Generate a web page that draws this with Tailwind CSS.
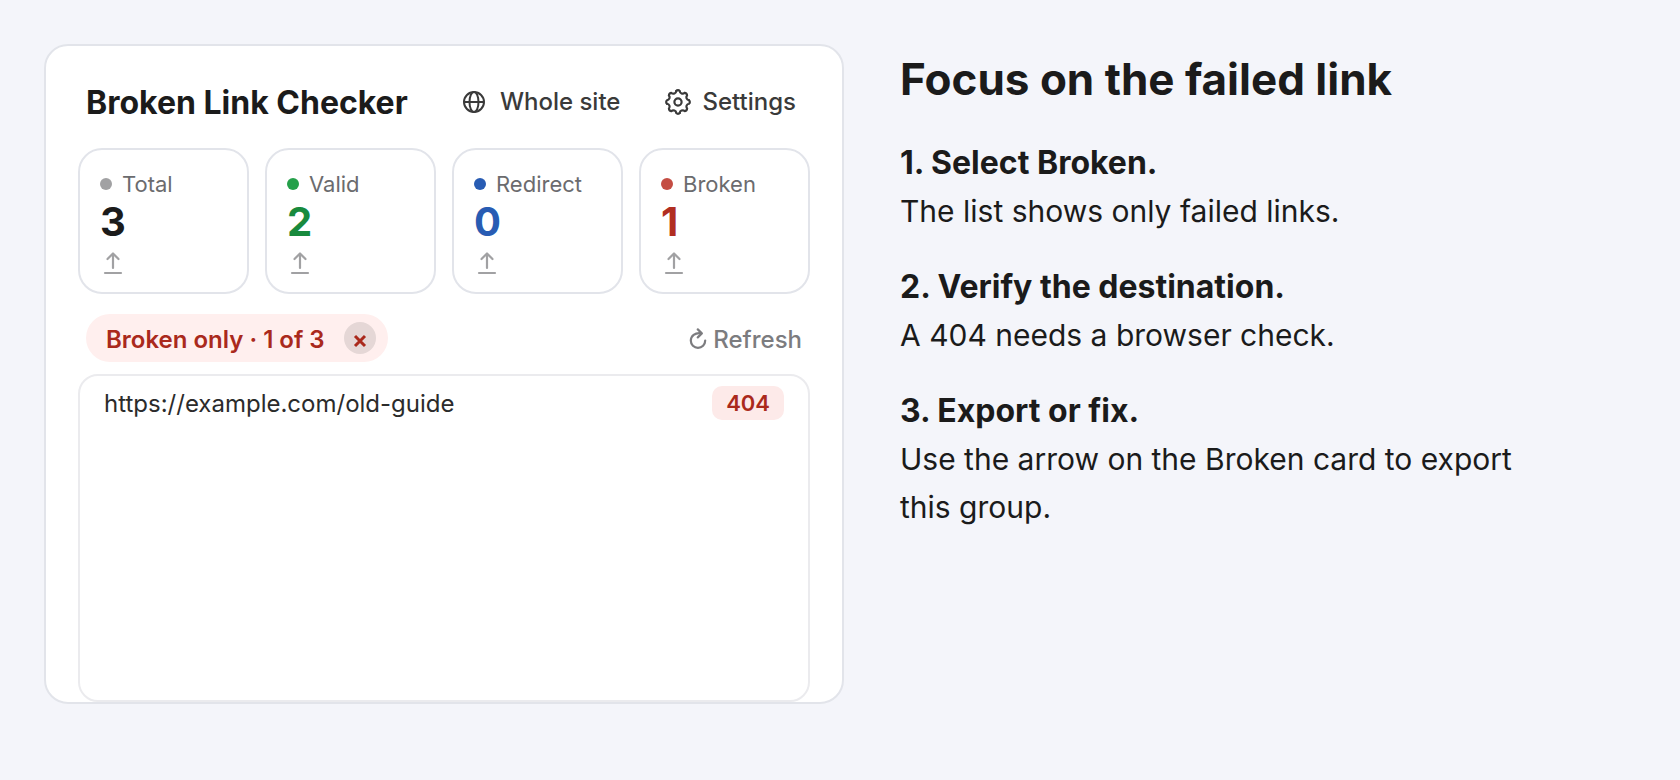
<!DOCTYPE html>
<html lang="en">
<head>
<meta charset="utf-8">
<meta name="viewport" content="width=device-width, initial-scale=1">
<title>Broken Link Checker</title>
<script src="https://cdn.jsdelivr.net/npm/@tailwindcss/browser@4"></script>
</head>
<body class="min-h-screen bg-[#f4f5fa] font-['Inter',sans-serif] text-[#1b1b1b]">
<svg class="hidden" aria-hidden="true">
  <symbol id="export" viewBox="0 0 26 26">
    <path d="M13 18V4M7.5 9 13 3.5 18.5 9" fill="none" stroke="currentColor" stroke-width="2.2" stroke-linecap="round" stroke-linejoin="round"/>
    <path d="M5 23h16" stroke="currentColor" stroke-width="2.2" stroke-linecap="round"/>
  </symbol>
  <path id="tooth" d="M11.06-1.75A2.4 2.4 0 0 1 11.06 1.75C8.7 1.85 7.46 4.85 9.06 6.58"/>
</svg>
<main class="grid items-start gap-14 p-11 lg:grid-cols-[25fr_23fr]">
  <section class="flex flex-col overflow-hidden rounded-3xl border-2 border-[#e2e4ea] bg-white px-8 pt-8">
    <header class="mb-[22px] flex h-12 items-center gap-11 pr-[14px] pl-2">
      <h1 class="mr-auto pt-[2px] text-[32px] font-bold whitespace-nowrap">Broken Link Checker</h1>
      <button type="button" class="flex items-center gap-[14px] text-2xl font-medium whitespace-nowrap text-[#3a3a3a]">
        <svg class="size-6" viewBox="0 0 24 24" fill="none" stroke="currentColor" stroke-width="2" aria-hidden="true"><circle cx="12" cy="12" r="10"/><ellipse cx="12" cy="12" rx="4.5" ry="10"/><path d="M2 12h20"/></svg>
        Whole site
      </button>
      <button type="button" class="flex items-center gap-[10px] text-2xl font-medium text-[#3a3a3a]">
        <svg class="size-7" viewBox="-14 -14 28 28" fill="none" stroke="currentColor" stroke-width="2.2" stroke-linejoin="round" stroke-linecap="round" aria-hidden="true"><use href="#tooth"/><use href="#tooth" transform="rotate(45)"/><use href="#tooth" transform="rotate(90)"/><use href="#tooth" transform="rotate(135)"/><use href="#tooth" transform="rotate(180)"/><use href="#tooth" transform="rotate(225)"/><use href="#tooth" transform="rotate(270)"/><use href="#tooth" transform="rotate(315)"/><circle r="3.6"/></svg>
        Settings
      </button>
    </header>

    <div class="grid grid-cols-4 gap-4">
      <article class="rounded-3xl border-2 border-[#e2e4ea] px-5 pt-5 pb-4">
        <h2 class="flex items-center gap-[10px] text-[22px] leading-7 text-[#6b6b6e]"><span class="size-3 rounded-full bg-[#a1a1a3]"></span>Total</h2>
        <p class="text-[40px] leading-[48px] font-bold">3</p>
        <button type="button" aria-label="Export total" class="mt-1 block text-[#a1a1a3]"><svg class="size-[26px]"><use href="#export"/></svg></button>
      </article>
      <article class="rounded-3xl border-2 border-[#e2e4ea] px-5 pt-5 pb-4">
        <h2 class="flex items-center gap-[10px] text-[22px] leading-7 text-[#6b6b6e]"><span class="size-3 rounded-full bg-[#25a04a]"></span>Valid</h2>
        <p class="text-[40px] leading-[48px] font-bold text-[#188a3d]">2</p>
        <button type="button" aria-label="Export valid" class="mt-1 block text-[#a1a1a3]"><svg class="size-[26px]"><use href="#export"/></svg></button>
      </article>
      <article class="rounded-3xl border-2 border-[#e2e4ea] px-5 pt-5 pb-4">
        <h2 class="flex items-center gap-[10px] text-[22px] leading-7 text-[#6b6b6e]"><span class="size-3 rounded-full bg-[#285cb3]"></span>Redirect</h2>
        <p class="text-[40px] leading-[48px] font-bold text-[#285cb3]">0</p>
        <button type="button" aria-label="Export redirect" class="mt-1 block text-[#a1a1a3]"><svg class="size-[26px]"><use href="#export"/></svg></button>
      </article>
      <article class="rounded-3xl border-2 border-[#e2e4ea] px-5 pt-5 pb-4">
        <h2 class="flex items-center gap-[10px] text-[22px] leading-7 text-[#6b6b6e]"><span class="size-3 rounded-full bg-[#c44d43]"></span>Broken</h2>
        <p class="text-[40px] leading-[48px] font-bold text-[#b12e21]">1</p>
        <button type="button" aria-label="Export broken" class="mt-1 block text-[#a1a1a3]"><svg class="size-[26px]"><use href="#export"/></svg></button>
      </article>
    </div>

    <div class="mt-5 mb-3 flex items-center justify-between px-2">
      <div class="flex h-12 items-center gap-[19px] rounded-full bg-[#ffefee] pr-3 pl-5 text-2xl font-semibold text-[#aa291c]">
        <span class="pt-[3px]">Broken only · 1 of 3</span>
        <button type="button" aria-label="Clear filter" class="size-8 rounded-full bg-[#e5d7d6]"><svg viewBox="0 0 32 32" fill="none" stroke="currentColor" stroke-width="3"><path d="m11 14 10 10M21 14 11 24"/></svg></button>
      </div>
      <button type="button" class="flex items-center gap-[6px] pt-1 text-2xl font-medium text-[#7c7c7f]">
        <svg class="h-6 w-[18px]" viewBox="0 0 18 24" fill="none" stroke="currentColor" stroke-width="2.2" aria-hidden="true"><path d="M12 5.2C6 4.4 1.8 8 1.8 12.6A7.2 7.2 0 1 0 16.2 12.6" stroke-linecap="round"/><path d="M8.8 1.4 12.8 5.4 8.8 9.4" stroke-linejoin="round" stroke-linecap="round"/></svg>
        Refresh
      </button>
    </div>

    <ul class="min-h-[328px] rounded-[20px] border-2 border-[#ebebee] px-6 py-[10px]">
      <li class="flex items-center justify-between">
        <a href="https://example.com/old-guide" class="pt-[2px] text-2xl text-[#2b2b2b]">https://example.com/old-guide</a>
        <span class="rounded-[10px] bg-[#fdeae9] px-[14px] text-[22px] leading-[34px] font-semibold text-[#aa291c]">404</span>
      </li>
    </ul>
  </section>

  <section class="pt-[9px]">
    <h2 class="mb-[34px] text-[44px] leading-[52px] font-bold">Focus on the failed link</h2>
    <ol class="flex flex-col gap-7 text-[30px] leading-[48px]">
      <li><strong class="block text-[32px] font-bold">1. Select Broken.</strong>The list shows only failed links.</li>
      <li><strong class="block text-[32px] font-bold">2. Verify the destination.</strong>A 404 needs a browser check.</li>
      <li><strong class="block text-[32px] font-bold">3. Export or fix.</strong><span class="block max-w-[660px]">Use the arrow on the Broken card to export this group.</span></li>
    </ol>
  </section>
</main>
</body>
</html>
